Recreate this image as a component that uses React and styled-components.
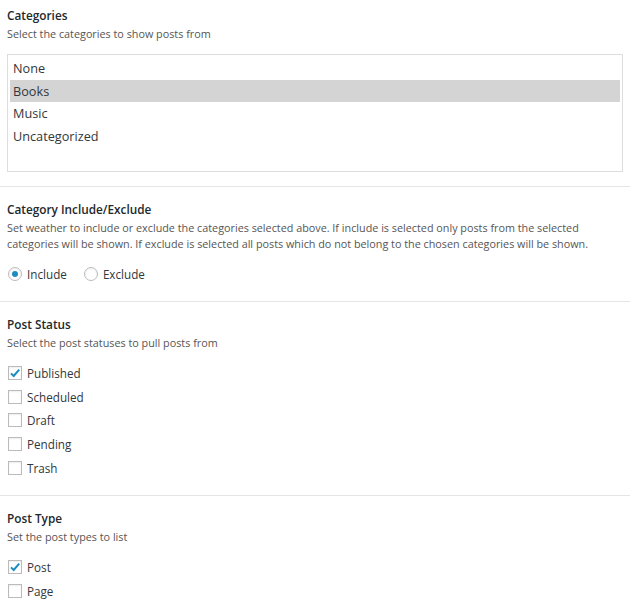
import React, { useState } from 'react';
import styled, { createGlobalStyle } from 'styled-components';

const GlobalStyle = createGlobalStyle`
  body {
    margin: 0;
    background: #fff;
    font-family: 'Open Sans', 'Noto Sans', sans-serif;
    color: #444;
  }
`;

const Page = styled.div`
  width: 630px;
`;

const Section = styled.div`
  padding: ${(p) => (p.first ? '6px 7px 14px' : '13px 7px 15px')};
  border-top: ${(p) => (p.first ? 'none' : '1px solid #e5e5e5')};
`;

const Title = styled.div`
  font-size: 11.8px;
  font-weight: 600;
  line-height: 18px;
  color: #23282d;
`;

const Description = styled.div`
  margin-top: 2px;
  font-size: 10.8px;
  line-height: 16px;
  color: #555;
`;

const ListBox = styled.div`
  box-sizing: border-box;
  margin-top: 12px;
  height: 118px;
  padding: 2px;
  border: 1px solid #ddd;
  background: #fff;
`;

const ListOption = styled.div`
  height: 22.5px;
  line-height: 22.5px;
  padding-left: 3px;
  font-size: 12.7px;
  color: #32373c;
  background: ${(p) => (p.selected ? '#d4d4d4' : 'transparent')};
  cursor: default;
`;

const Options = styled.div`
  margin-top: 10px;
  display: flex;
  flex-direction: ${(p) => (p.inline ? 'row' : 'column')};
  gap: ${(p) => (p.inline ? '16px' : '0')};
`;

const Choice = styled.label`
  display: flex;
  align-items: center;
  gap: 5px;
  height: ${(p) => (p.tall ? '24px' : '23.8px')};
  padding-left: 1px;
  font-size: 11.7px;
  color: #32373c;
  cursor: pointer;
`;

const Box = styled.span`
  box-sizing: border-box;
  flex: none;
  width: 14px;
  height: 14px;
  border: 1px solid #bbb;
  border-radius: ${(p) => (p.round ? '50%' : '0')};
  box-shadow: inset 0 1px 2px rgba(0, 0, 0, 0.07);
  display: flex;
  align-items: center;
  justify-content: center;
  background: #fff;
`;

const Dot = styled.span`
  width: 6px;
  height: 6px;
  border-radius: 50%;
  background: #1e8cbe;
`;

const Check = () => (
  <svg width="12" height="12" viewBox="0 0 12 12">
    <path d="M2 6.4 L4.7 9 L10.2 2.6" fill="none" stroke="#1e8cbe" strokeWidth="2" />
  </svg>
);

const Checkbox = ({ label, checked, onToggle }) => (
  <Choice onClick={onToggle}>
    <Box>{checked && <Check />}</Box>
    {label}
  </Choice>
);

const Radio = ({ label, checked, onSelect }) => (
  <Choice tall onClick={onSelect}>
    <Box round>{checked && <Dot />}</Box>
    {label}
  </Choice>
);

const categories = ['None', 'Books', 'Music', 'Uncategorized'];
const statuses = ['Published', 'Scheduled', 'Draft', 'Pending', 'Trash'];
const types = ['Post', 'Page'];

export default function App() {
  const [selectedCat, setSelectedCat] = useState('Books');
  const [mode, setMode] = useState('include');
  const [status, setStatus] = useState({ Published: true });
  const [type, setType] = useState({ Post: true });

  return (
    <Page>
      <GlobalStyle />
      <Section first>
        <Title>Categories</Title>
        <Description>Select the categories to show posts from</Description>
        <ListBox>
          {categories.map((c) => (
            <ListOption key={c} selected={c === selectedCat} onClick={() => setSelectedCat(c)}>
              {c}
            </ListOption>
          ))}
        </ListBox>
      </Section>

      <Section>
        <Title>Category Include/Exclude</Title>
        <Description>
          Set weather to include or exclude the categories selected above. If include is selected only posts from the
          selected categories will be shown. If exclude is selected all posts which do not belong to the chosen
          categories will be shown.
        </Description>
        <Options inline>
          <Radio label="Include" checked={mode === 'include'} onSelect={() => setMode('include')} />
          <Radio label="Exclude" checked={mode === 'exclude'} onSelect={() => setMode('exclude')} />
        </Options>
      </Section>

      <Section>
        <Title>Post Status</Title>
        <Description>Select the post statuses to pull posts from</Description>
        <Options>
          {statuses.map((s) => (
            <Checkbox
              key={s}
              label={s}
              checked={!!status[s]}
              onToggle={() => setStatus({ ...status, [s]: !status[s] })}
            />
          ))}
        </Options>
      </Section>

      <Section>
        <Title>Post Type</Title>
        <Description>Set the post types to list</Description>
        <Options>
          {types.map((t) => (
            <Checkbox key={t} label={t} checked={!!type[t]} onToggle={() => setType({ ...type, [t]: !type[t] })} />
          ))}
        </Options>
      </Section>
    </Page>
  );
}
